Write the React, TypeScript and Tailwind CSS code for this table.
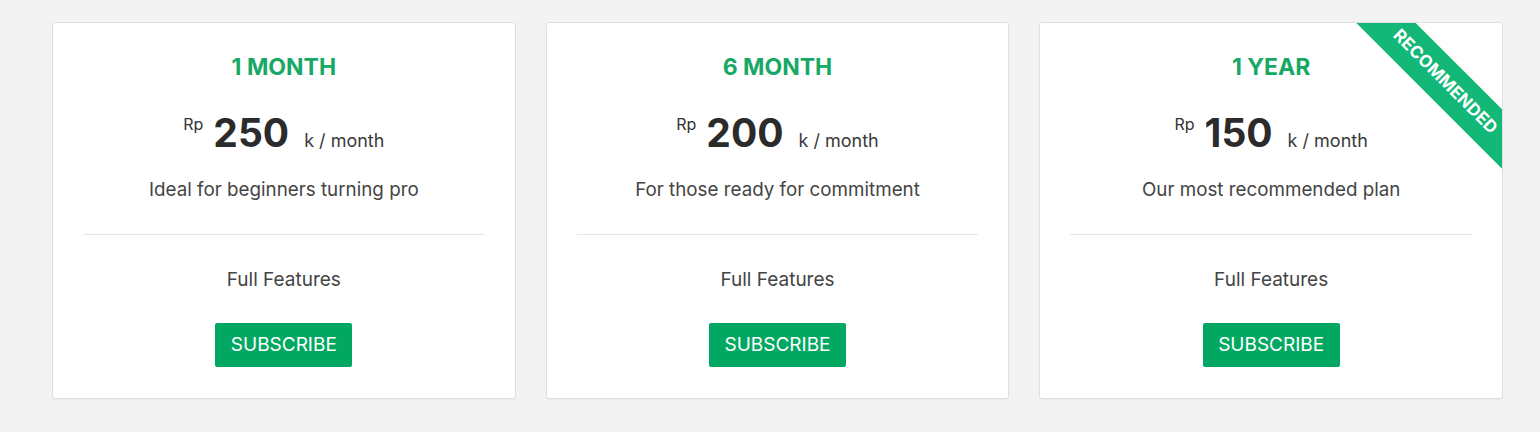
type Plan = {
  title: string
  price: string
  tagline: string
  recommended?: boolean
}

const plans: Plan[] = [
  { title: '1 MONTH', price: '250', tagline: 'Ideal for beginners turning pro' },
  { title: '6 MONTH', price: '200', tagline: 'For those ready for commitment' },
  { title: '1 YEAR', price: '150', tagline: 'Our most recommended plan', recommended: true },
]

function PlanCard({ plan }: { plan: Plan }) {
  return (
    <div className="relative flex flex-col items-center overflow-hidden rounded-[3px] border border-[#e0e0e0] bg-white pt-[30px] pb-[31px] shadow-[0_1px_1px_rgba(0,0,0,0.04)]">
      {plan.recommended && (
        <div className="absolute top-[38px] -right-[63px] flex h-[42px] w-[240px] rotate-45 items-center justify-center bg-[#13b878] text-[17px] font-bold tracking-[0.2px] text-white">
          RECOMMENDED
        </div>
      )}

      <h3 className="text-[23px] leading-[28px] font-bold text-[#17a865]">{plan.title}</h3>

      <div className="mt-[32px] flex items-baseline text-[#2b2b2b]">
        <span className="mt-[3px] mr-[10px] self-start text-[16px] leading-none text-[#333]">Rp</span>
        <span className="text-[39px] leading-none font-bold">{plan.price}</span>
        <span className="ml-[15px] text-[18px] leading-none text-[#3a3a3a]">k / month</span>
      </div>

      <p className="mt-[26px] text-[18.8px] leading-[24px] text-[#444]">{plan.tagline}</p>

      <div className="mt-[32px] h-px w-[calc(100%-60px)] bg-[#e5e5e5]" />

      <p className="mt-[33px] text-[19px] leading-[24px] text-[#444]">Full Features</p>

      <button
        type="button"
        className="mt-[31px] h-[44px] w-[137px] rounded-[2px] bg-[#02a862] text-[19px] text-white"
      >
        SUBSCRIBE
      </button>
    </div>
  )
}

export default function App() {
  return (
    <div className="min-h-screen w-full bg-[#f3f3f3] pt-[22px] pl-[52px] [font-family:Inter,'Liberation_Sans',sans-serif]">
      <div className="grid w-[1451px] grid-cols-3 gap-[30px]">
        {plans.map((p) => (
          <PlanCard key={p.title} plan={p} />
        ))}
      </div>
    </div>
  )
}
